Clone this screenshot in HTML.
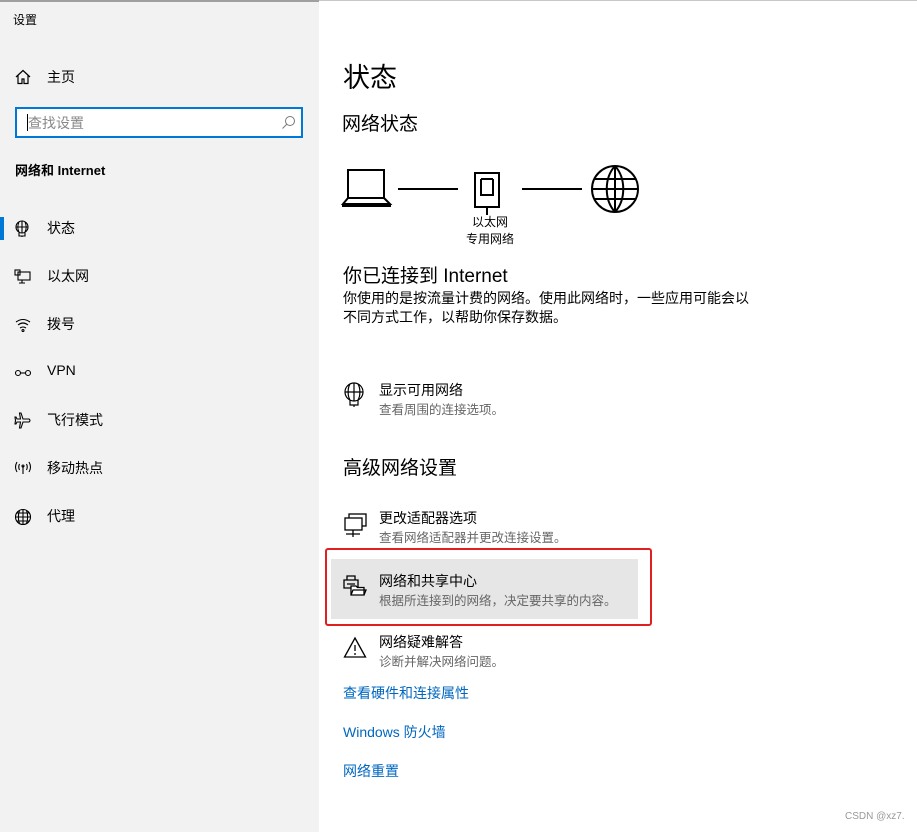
<!DOCTYPE html>
<html><head><meta charset="utf-8"><style>
*{margin:0;padding:0;box-sizing:border-box}
body{width:917px;height:832px;overflow:hidden;background:#fff;font-family:"Liberation Sans","Noto Sans CJK SC",sans-serif;color:#000;position:relative}
.abs{position:absolute;white-space:nowrap}
#left{position:absolute;left:0;top:0;width:319px;height:832px;background:#f2f2f2;border-top:2px solid #a0a0a0}
#topline{position:absolute;left:319px;top:0;width:598px;height:1px;background:#c8c8c8}
.nav{position:absolute;left:47px;font-size:14px}
.ic{position:absolute;left:14px}
.f13{font-size:14px}.f12{font-size:12px}
.sub{color:#666;font-size:12.5px}
.link{color:#0067c0;font-size:14px}
</style></head><body>
<div id="left">
<div class="abs f12" style="left:13px;top:9px">设置</div>
<svg class="ic" style="top:67px" width="18" height="16" viewBox="0 0 18 16" fill="none" stroke="#000" stroke-width="1.2"><path d="M2 8 L9 1.5 L16 8 M4 6.5 V14.5 H8 V10 H10 V14.5 H14 V6.5"/></svg>
<div class="nav" style="top:65px">主页</div>
<div style="position:absolute;left:15px;top:105px;width:288px;height:31px;border:2px solid #0078d7;background:#fff"></div>
<div style="position:absolute;left:27px;top:112px;width:1px;height:17px;background:#000"></div>
<div class="abs" style="left:28px;top:111px;font-size:14px;color:#888">查找设置</div>
<svg class="abs" style="left:281px;top:113px" width="15" height="15" viewBox="0 0 15 15" fill="none" stroke="#777" stroke-width="1"><circle cx="9" cy="6" r="4.5"/><path d="M6 9 L1.5 13.5"/></svg>
<div class="abs" style="left:15px;top:158px;font-size:13px;font-weight:bold">网络和 Internet</div>
<div style="position:absolute;left:0;top:215px;width:4px;height:23px;background:#0078d7"></div>
<svg class="ic" style="top:218px" width="18" height="18" viewBox="0 0 18 18" fill="none" stroke="#000" stroke-width="1.1"><circle cx="8" cy="7" r="6"/><path d="M2 7H14M8 1V13M5 2C3.5 5 3.5 9 5 12M11 2C12.5 5 12.5 9 11 12M5 13V16H11V13M8 16V17"/></svg>
<div class="nav" style="top:216px">状态</div>
<svg class="ic" style="top:267px" width="18" height="16" viewBox="0 0 18 16" fill="none" stroke="#000" stroke-width="1.1"><rect x="1" y="1" width="5" height="5"/><rect x="4" y="3" width="12" height="8"/><path d="M8 11V14M5 14H11"/></svg>
<div class="nav" style="top:264px">以太网</div>
<svg class="ic" style="top:315px" width="18" height="16" viewBox="0 0 18 16" fill="none" stroke="#000" stroke-width="1.1"><path d="M2 5Q9 0 16 5M4 8Q9 4 14 8M6 11Q9 9 12 11"/><circle cx="9" cy="13.5" r="1"/></svg>
<div class="nav" style="top:312px">拨号</div>
<svg class="ic" style="top:364px" width="18" height="14" viewBox="0 0 18 14" fill="none" stroke="#000" stroke-width="1.1"><circle cx="4" cy="7" r="2.5"/><circle cx="14" cy="7" r="2.5"/><path d="M6.5 7H11.5"/></svg>
<div class="nav" style="top:360px">VPN</div>
<svg class="ic" style="top:410px" width="18" height="18" viewBox="0 0 18 18" fill="none" stroke="#000" stroke-width="1.1"><path d="M7 1L9 7L15 7Q17 8.5 15 10L9 10L7 16H5.5L6.5 10L3 10L2 12H1L1.5 8.5L1 5H2L3 7L6.5 7L5.5 1Z"/></svg>
<div class="nav" style="top:408px">飞行模式</div>
<svg class="ic" style="top:458px" width="18" height="16" viewBox="0 0 18 16" fill="none" stroke="#000" stroke-width="1.1"><path d="M3 2Q0 7 3 12M15 2Q18 7 15 12M5.5 4Q4 7 5.5 10M12.5 4Q14 7 12.5 10M9 6V14"/><circle cx="9" cy="6" r="1"/></svg>
<div class="nav" style="top:456px">移动热点</div>
<svg class="ic" style="top:506px" width="18" height="18" viewBox="0 0 18 18" fill="none" stroke="#000" stroke-width="1.1"><circle cx="9" cy="9" r="7.5"/><path d="M1.5 9H16.5M9 1.5V16.5M5.5 2.5C4 6 4 12 5.5 15.5M12.5 2.5C14 6 14 12 12.5 15.5M3 5H15M3 13H15"/></svg>
<div class="nav" style="top:504px">代理</div>
</div>
<div id="topline"></div>

<div class="abs" style="left:343px;top:56px;font-size:27px">状态</div>
<div class="abs" style="left:342px;top:109px;font-size:19px">网络状态</div>
<svg class="abs" style="left:340px;top:163px" width="305" height="55" viewBox="0 0 305 55" fill="none" stroke="#000" stroke-width="2"><path d="M8 7H44V35H8Z M8 35L3 41H50L44 35 M3 41V43H50V41"/><path d="M58 26H118M182 26H242"/><rect x="135" y="10" width="24" height="34"/><path d="M141 16H153M141 16V32H153V16M147 44V52"/><circle cx="275" cy="26" r="23"/><path d="M252 26H298M254 16H296M254 36H296M275 3V49M275 3C264 15 264 37 275 49M275 3C286 15 286 37 275 49"/></svg>
<div class="abs f12" style="left:472px;top:213px">以太网</div>
<div class="abs f12" style="left:466px;top:230px">专用网络</div>
<div class="abs" style="left:343px;top:261px;font-size:19px">你已连接到 Internet</div>
<div class="abs" style="left:343px;top:289px;line-height:19px;font-size:14px">你使用的是按流量计费的网络。使用此网络时，一些应用可能会以<br>不同方式工作，以帮助你保存数据。</div>

<svg class="abs" style="left:343px;top:382px" width="24" height="26" viewBox="0 0 24 26" fill="none" stroke="#000" stroke-width="1.2"><circle cx="11" cy="10" r="9"/><path d="M2 10H20M11 1V19M7 2C4.5 6 4.5 14 7 18M15 2C17.5 6 17.5 14 15 18M7 18V23H15V18M11 23V25"/></svg>
<div class="abs f13" style="left:379px;top:380px">显示可用网络</div>
<div class="abs sub" style="left:379px;top:399px">查看周围的连接选项。</div>

<div class="abs" style="left:343px;top:453px;font-size:19px">高级网络设置</div>

<svg class="abs" style="left:343px;top:513px" width="26" height="26" viewBox="0 0 26 26" fill="none" stroke="#000" stroke-width="1.3"><rect x="6" y="1" width="17" height="12"/><rect x="2" y="5" width="17" height="12" fill="#fff"/><path d="M10 17V21M3 21H17M10 21V24"/></svg>
<div class="abs f13" style="left:379px;top:508px">更改适配器选项</div>
<div class="abs sub" style="left:379px;top:527px">查看网络适配器并更改连接设置。</div>

<div style="position:absolute;left:325px;top:548px;width:327px;height:78px;border:2px solid #e02020;border-radius:3px"></div>
<div style="position:absolute;left:331px;top:559px;width:307px;height:60px;background:#e6e6e6"></div>
<svg class="abs" style="left:343px;top:574px" width="24" height="24" viewBox="0 0 24 24" fill="none" stroke="#000" stroke-width="1.3"><path d="M4 6V2H12V6M1 6H15V14H1Z M4 10H12"/><path d="M8 12H13L14.5 13.5H21V21H8Z" fill="#fff"/><path d="M8 21L10 16H23L21 21"/></svg>
<div class="abs f13" style="left:379px;top:571px">网络和共享中心</div>
<div class="abs sub" style="left:379px;top:590px">根据所连接到的网络，决定要共享的内容。</div>

<svg class="abs" style="left:343px;top:636px" width="24" height="24" viewBox="0 0 24 24" fill="none" stroke="#000" stroke-width="1.3"><path d="M12 2L22.5 21H1.5Z M12 9V15M12 17V19"/></svg>
<div class="abs f13" style="left:379px;top:632px">网络疑难解答</div>
<div class="abs sub" style="left:379px;top:651px">诊断并解决网络问题。</div>

<div class="abs link" style="left:343px;top:683px">查看硬件和连接属性</div>
<div class="abs link" style="left:343px;top:722px">Windows 防火墙</div>
<div class="abs link" style="left:343px;top:761px">网络重置</div>
<div class="abs" style="left:845px;top:811px;font-size:10px;color:#999">CSDN @xz7.</div>
</body></html>
